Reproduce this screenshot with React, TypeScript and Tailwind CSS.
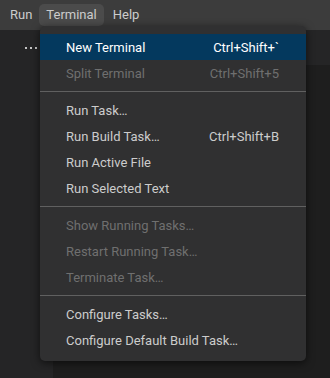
import React from "react";

type Item =
  | { sep: true }
  | { label: string; key?: string; disabled?: boolean; selected?: boolean };

const items: Item[] = [
  { label: "New Terminal", key: "Ctrl+Shift+`", selected: true },
  { label: "Split Terminal", key: "Ctrl+Shift+5", disabled: true },
  { sep: true },
  { label: "Run Task…" },
  { label: "Run Build Task…", key: "Ctrl+Shift+B" },
  { label: "Run Active File" },
  { label: "Run Selected Text" },
  { sep: true },
  { label: "Show Running Tasks…", disabled: true },
  { label: "Restart Running Task…", disabled: true },
  { label: "Terminate Task…", disabled: true },
  { sep: true },
  { label: "Configure Tasks…" },
  { label: "Configure Default Build Task…" },
];

export default function App() {
  return (
    <div
      className="relative w-[330px] h-[378px] overflow-hidden bg-[#1e1e1e] text-[13px] text-[#cccccc]"
      style={{ fontFamily: '"Segoe UI", Roboto, "Noto Sans", sans-serif' }}
    >
      {/* menu bar */}
      <div className="h-[30px] bg-[#3c3c3c] flex items-center pl-[2px]">
        <div className="h-[22px] pl-[8px] pr-[7px] flex items-center rounded-[5px]">Run</div>
        <div className="h-[22px] px-[7px] flex items-center rounded-[5px] bg-[#4b4b4b]">Terminal</div>
        <div className="h-[22px] px-[8px] ml-[1px] flex items-center rounded-[5px]">Help</div>
      </div>
      <div className="flex h-[348px]">
        <div className="w-[53px] bg-[#252526] flex justify-center pt-[16px]">
          <svg width="14" height="4" viewBox="0 0 14 4" className="ml-[8px]">
            <rect x="1" y="1" width="2" height="2" fill="#c5c5c5" />
            <rect x="6" y="1" width="2" height="2" fill="#c5c5c5" />
            <rect x="11" y="1" width="2" height="2" fill="#c5c5c5" />
          </svg>
        </div>
        <div className="flex-1 flex flex-col">
          <div className="h-[35px] bg-[#252526]" />
          <div className="flex-1 bg-[#1e1e1e]" />
        </div>
      </div>

      {/* dropdown menu */}
      <div className="absolute left-[40px] top-[26px] w-[266px] py-[8px] rounded-[5px] bg-[#303031] shadow-[0_2px_8px_rgba(0,0,0,0.6)]">
        {items.map((it, i) =>
          "sep" in it ? (
            <div key={i} className="py-[5px]">
              <div className="h-px bg-[#606060]" />
            </div>
          ) : (
            <div
              key={i}
              className={
                "h-[26px] flex items-center justify-between pl-[26px] pr-[27px] pt-[1px] " +
                (it.selected
                  ? "bg-[#04395e] text-white"
                  : it.disabled
                  ? "text-[#6f6f6f]"
                  : "text-[#cccccc]")
              }
            >
              <span>{it.label}</span>
              {it.key ? <span>{it.key}</span> : null}
            </div>
          )
        )}
      </div>
    </div>
  );
}
